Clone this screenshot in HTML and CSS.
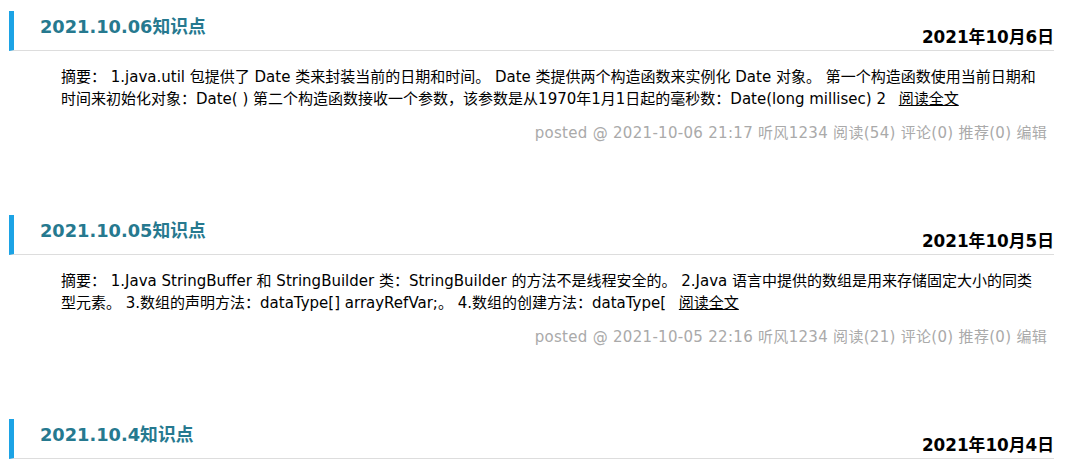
FILE: index.html
```html
<!DOCTYPE html>
<html lang="zh-CN">
<head>
<meta charset="utf-8">
<title>听风1234</title>
<link rel="stylesheet" href="styles.css">
</head>
<body>
<div class="posts">
  <div class="post">
    <div class="post-head">
      <h2 class="post-title">2021.10.06知识点</h2>
      <span class="post-date">2021年10月6日</span>
    </div>
    <div class="post-summary">摘要： 1.java.util 包提供了 Date 类来封装当前的日期和时间。 Date 类提供两个构造函数来实例化 Date 对象。 第一个构造函数使用当前日期和时间来初始化对象：Date( ) 第二个构造函数接收一个参数，该参数是从1970年1月1日起的毫秒数：Date(long millisec) 2 <a class="more" href="#">阅读全文</a></div>
    <div class="post-meta">posted @ 2021-10-06 21:17 听风1234 阅读(54) 评论(0) 推荐(0) 编辑</div>
  </div>
  <div class="post">
    <div class="post-head">
      <h2 class="post-title">2021.10.05知识点</h2>
      <span class="post-date">2021年10月5日</span>
    </div>
    <div class="post-summary">摘要： 1.Java StringBuffer 和 StringBuilder 类：StringBuilder 的方法不是线程安全的。 2.Java 语言中提供的数组是用来存储固定大小的同类型元素。 3.数组的声明方法：dataType[] arrayRefVar;。 4.数组的创建方法：dataType[ <a class="more" href="#">阅读全文</a></div>
    <div class="post-meta">posted @ 2021-10-05 22:16 听风1234 阅读(21) 评论(0) 推荐(0) 编辑</div>
  </div>
  <div class="post">
    <div class="post-head">
      <h2 class="post-title">2021.10.4知识点</h2>
      <span class="post-date">2021年10月4日</span>
    </div>
  </div>
</div>
</body>
</html>
```

FILE: styles.css
```css
html, body {
  margin: 0;
  padding: 0;
  background: #fff;
  overflow: hidden;
}
body {
  font-family: "DejaVu Sans", "Noto Sans CJK SC", sans-serif;
  font-size: 15px;
  color: #000;
}
.posts {
  padding: 11px 19px 0 9px;
  display: flex;
  flex-direction: column;
}
.post {
  height: 204px;
  flex: none;
}
.post-head {
  display: flex;
  justify-content: space-between;
  align-items: flex-end;
  height: 39px;
  border-left: 5px solid #1ca3e5;
  border-bottom: 1px solid #dddddd;
}
.post-title {
  margin: 0;
  align-self: flex-start;
  padding: 5px 0 0 26px;
  font-size: 17.8px;
  line-height: 22px;
  font-weight: bold;
  color: #26798f;
}
.post-date {
  font-size: 16.8px;
  font-weight: bold;
  line-height: 20px;
  padding-bottom: 3px;
}
.post-summary {
  margin: 15px 12px 0 52px;
  line-height: 22px;
}
.more {
  color: #000;
  text-decoration: underline;
  margin-left: 8px;
}
.post-meta {
  margin-top: 12px;
  padding-right: 7px;
  text-align: right;
  color: #aaaaaa;
  line-height: 22px;
  letter-spacing: 0.3px;
}
```
